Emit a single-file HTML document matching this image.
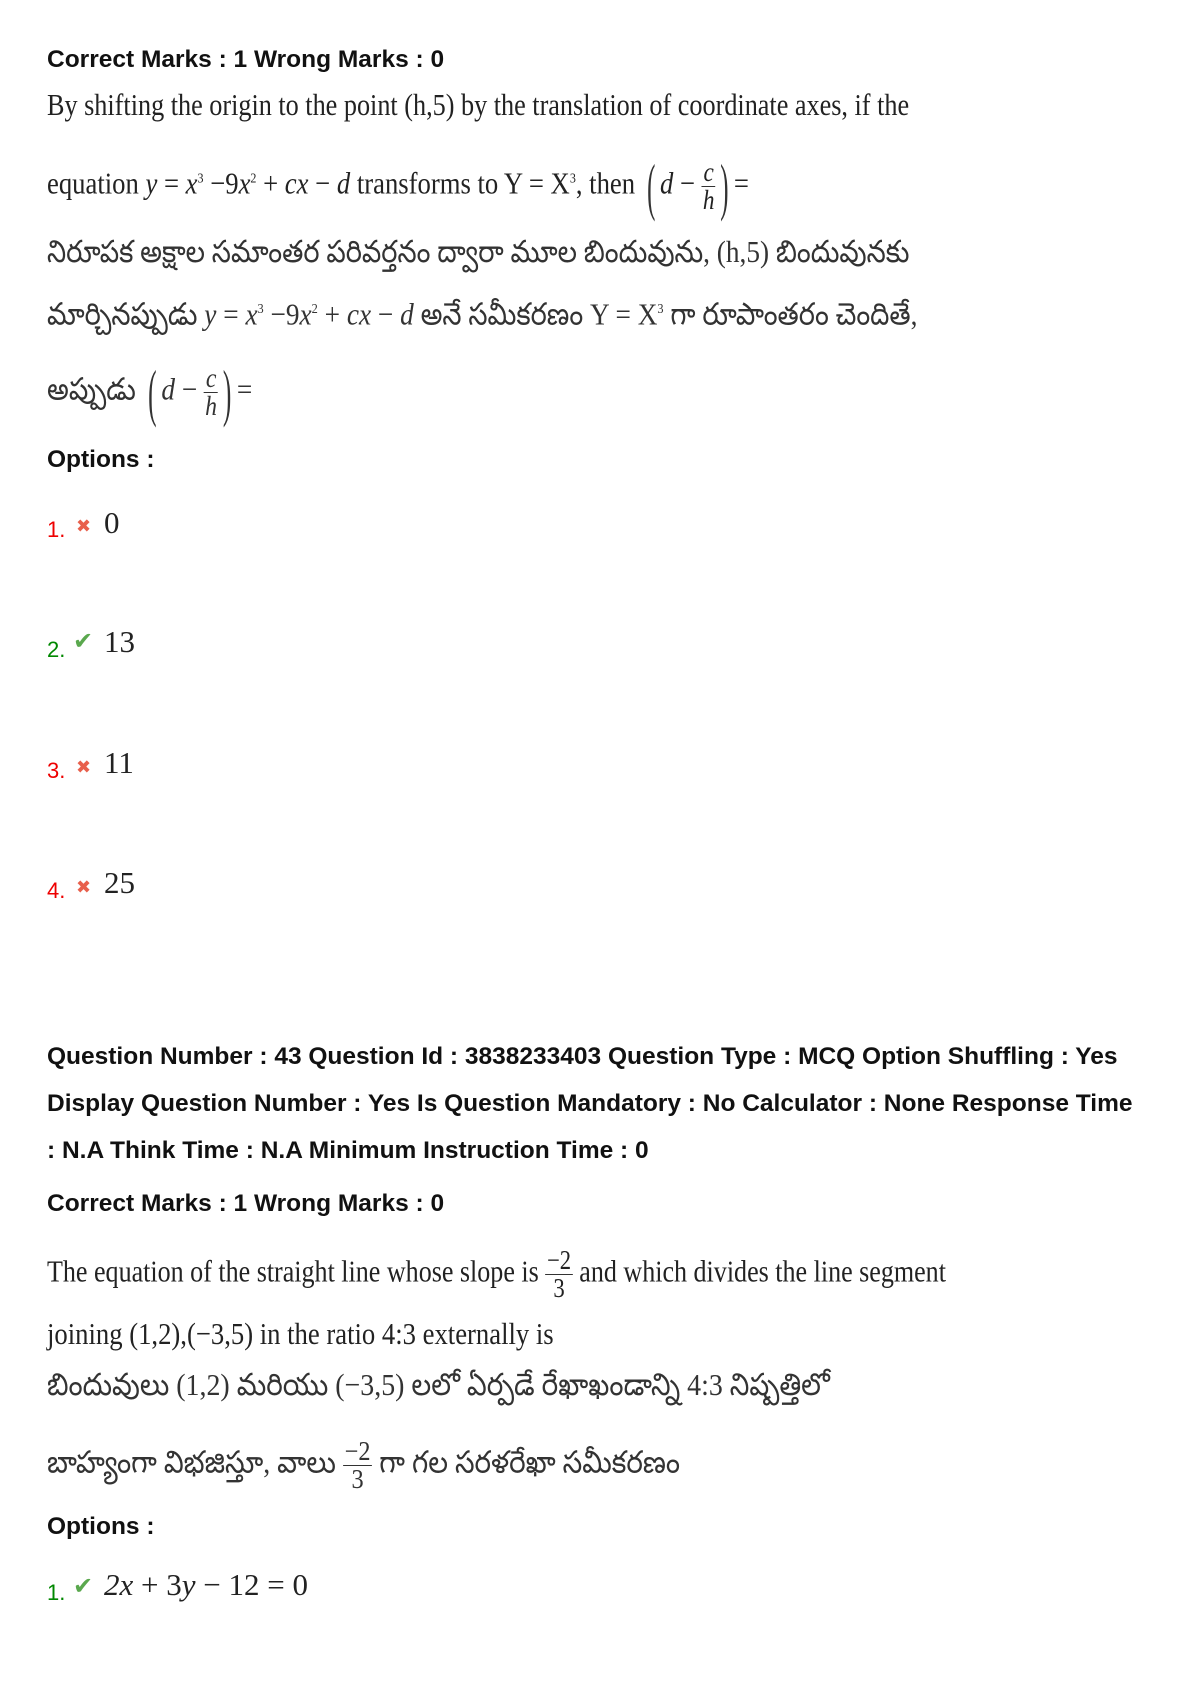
<!DOCTYPE html>
<html><head><meta charset="utf-8">
<style>
html,body{margin:0;padding:0;background:#fff;}
body{width:1190px;height:1684px;position:relative;overflow:hidden;}
.b{position:absolute;left:47px;font-family:"Liberation Sans",sans-serif;font-weight:bold;font-size:24.5px;line-height:26px;color:#111;white-space:nowrap;}
.m{position:absolute;left:47px;font-family:"Liberation Serif","DejaVu Serif",serif;font-size:31px;line-height:34px;color:#222;white-space:nowrap;transform-origin:left center;}
.t{color:#333;}
.num{position:absolute;left:47px;font-family:"Liberation Sans",sans-serif;font-size:22px;line-height:22px;}
.r{color:#e00;} .g{color:#080;}
.ic{position:absolute;font-family:"DejaVu Sans",sans-serif;font-size:18px;line-height:18px;}
.ir{color:#e8604c;} .ig{color:#5aa84e;font-size:24px;}
.ov{position:absolute;left:104px;font-family:"Liberation Serif",serif;font-size:31px;line-height:30px;color:#222;}
.fr{display:inline-block;vertical-align:middle;text-align:center;font-size:27px;line-height:27px;}
.fr span{display:block;}
.fr .n{border-bottom:1.5px solid #333;padding:0 2px;}
.par{font-size:64px;font-weight:100;color:#333;vertical-align:middle;transform:scaleX(0.45);display:inline-block;}
i{font-style:italic;}
sup{font-size:14px;}
</style></head><body>

<div class="b" style="top:47px">Correct Marks : 1 Wrong Marks : 0</div>
<div class="m" style="top:88px;transform:scaleX(0.845)">By shifting the origin to the point (h,5) by the translation of coordinate axes, if the</div>
<div class="m" style="top:159px;transform:scaleX(0.86)">equation <i>y</i> = <i>x</i><sup>3</sup> −9<i>x</i><sup>2</sup> + <i>cx</i> − <i>d</i> transforms to Y = X<sup>3</sup>, then <span class="par">(</span><i>d</i> − <span class="fr"><span class="n"><i>c</i></span><span><i>h</i></span></span><span class="par">)</span>=</div>
<div class="m t" style="top:235px;transform:scaleX(0.88);font-family:'Liberation Serif','Noto Sans Telugu','Gautami',serif">నిరూపక అక్షాల సమాంతర పరివర్తనం ద్వారా మూల బిందువును, (h,5) బిందువునకు</div>
<div class="m t" style="top:293px;transform:scaleX(0.88);font-family:'Liberation Serif','Noto Sans Telugu',serif">మార్చినప్పుడు <i>y</i> = <i>x</i><sup>3</sup> −9<i>x</i><sup>2</sup> + <i>cx</i> − <i>d</i> అనే సమీకరణం Y = X<sup>3</sup> గా రూపాంతరం చెందితే,</div>
<div class="m t" style="top:365px;transform:scaleX(0.88);font-family:'Liberation Serif','Noto Sans Telugu',serif">అప్పుడు <span class="par">(</span><i>d</i> − <span class="fr"><span class="n"><i>c</i></span><span><i>h</i></span></span><span class="par">)</span>=</div>

<div class="b" style="top:447px">Options :</div>

<div class="num r" style="top:519px">1.</div><div class="ic ir" style="left:76px;top:518px">✖</div><div class="ov" style="top:508px">0</div>
<div class="num g" style="top:639px">2.</div><div class="ic ig" style="left:73px;top:632px">✔</div><div class="ov" style="top:627px">13</div>
<div class="num r" style="top:760px">3.</div><div class="ic ir" style="left:76px;top:759px">✖</div><div class="ov" style="top:748px">11</div>
<div class="num r" style="top:880px">4.</div><div class="ic ir" style="left:76px;top:879px">✖</div><div class="ov" style="top:868px">25</div>

<div class="b" style="top:1044px">Question Number : 43 Question Id : 3838233403 Question Type : MCQ Option Shuffling : Yes</div>
<div class="b" style="top:1091px">Display Question Number : Yes Is Question Mandatory : No Calculator : None Response Time</div>
<div class="b" style="top:1138px">: N.A Think Time : N.A Minimum Instruction Time : 0</div>
<div class="b" style="top:1191px">Correct Marks : 1 Wrong Marks : 0</div>

<div class="m" style="top:1247px;transform:scaleX(0.84)">The equation of the straight line whose slope is <span class="fr"><span class="n">−2</span><span>3</span></span> and which divides the line segment</div>
<div class="m" style="top:1317px;transform:scaleX(0.86)">joining (1,2),(−3,5) in the ratio 4:3 externally is</div>
<div class="m t" style="top:1368px;transform:scaleX(0.9);font-family:'Liberation Serif','Noto Sans Telugu',serif">బిందువులు (1,2) మరియు (−3,5) లలో ఏర్పడే రేఖాఖండాన్ని 4:3 నిష్పత్తిలో</div>
<div class="m t" style="top:1438px;transform:scaleX(0.9);font-family:'Liberation Serif','Noto Sans Telugu',serif">బాహ్యంగా విభజిస్తూ, వాలు <span class="fr"><span class="n">−2</span><span>3</span></span> గా గల సరళరేఖా సమీకరణం</div>

<div class="b" style="top:1514px">Options :</div>
<div class="num g" style="top:1582px">1.</div><div class="ic ig" style="left:73px;top:1577px">✔</div><div class="ov" style="top:1570px"><i>2x</i> + 3<i>y</i> − 12 = 0</div>

</body></html>
